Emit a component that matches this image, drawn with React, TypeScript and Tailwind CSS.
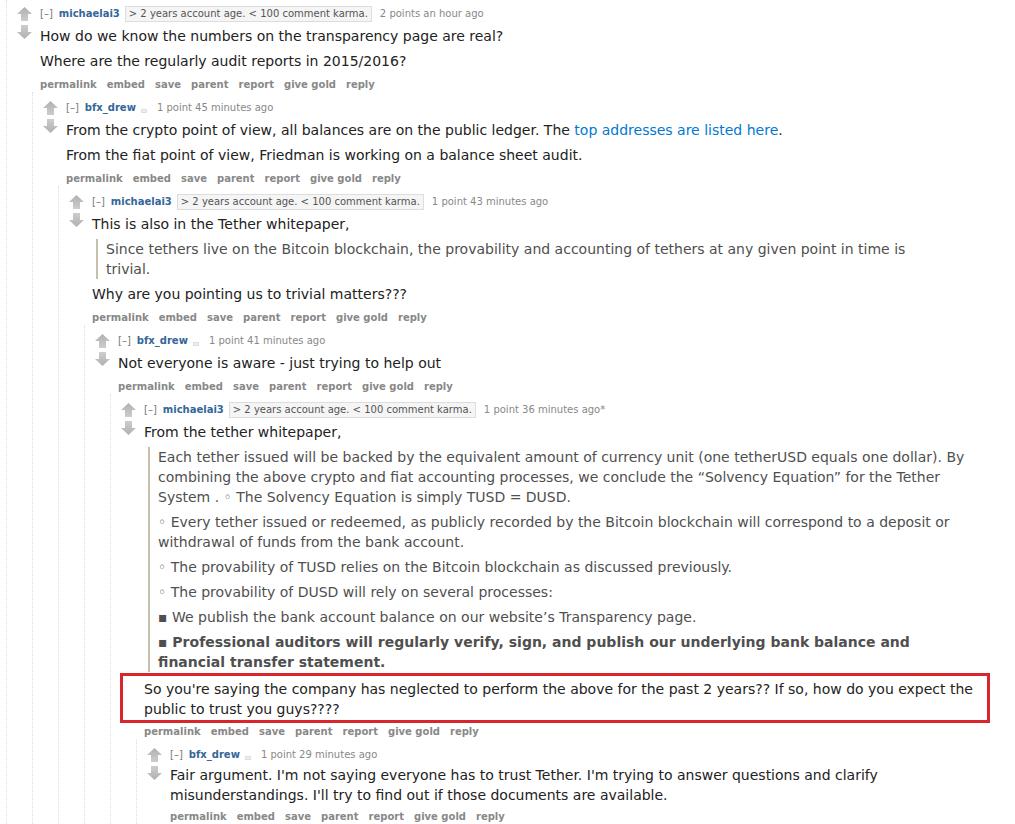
import { ReactNode } from 'react';

type CommentProps = {
  author: string;
  flair?: 'karma' | 'empty';
  meta: string;
  body: ReactNode;
  replies?: ReactNode;
  first?: boolean;
  tight?: boolean;
};

const UpArrow = () => (
  <svg width="15" height="14" viewBox="0 0 15 14">
    <defs>
      <linearGradient id="up" x1="0" y1="0" x2="0" y2="1">
        <stop offset="0" stopColor="#b0b0b0" />
        <stop offset="1" stopColor="#cdcdcd" />
      </linearGradient>
    </defs>
    <polygon points="7.5,0 15,7 11,7 11,14 4,14 4,7 0,7" fill="url(#up)" />
  </svg>
);

const DownArrow = () => (
  <svg width="15" height="14" viewBox="0 0 15 14">
    <defs>
      <linearGradient id="down" x1="0" y1="0" x2="0" y2="1">
        <stop offset="0" stopColor="#cdcdcd" />
        <stop offset="1" stopColor="#b0b0b0" />
      </linearGradient>
    </defs>
    <polygon points="4,0 11,0 11,7 15,7 7.5,14 0,7 4,7" fill="url(#down)" />
  </svg>
);

const Buttons = ({ className = 'mt-[5px]' }: { className?: string }) => (
  <ul className={`flex h-[16px] items-center gap-[10px] text-[10px] font-bold text-[#888] ${className}`}>
    {['permalink', 'embed', 'save', 'parent', 'report', 'give gold', 'reply'].map((b) => (
      <li key={b}>{b}</li>
    ))}
  </ul>
);

const Comment = ({ author, flair, meta, body, replies, first, tight }: CommentProps) => (
  <div className={`border-l border-dotted border-[#dddddf] ${first ? 'pt-[6px]' : 'pt-[8px]'}`}>
    <div className="flex">
      <div className="ml-[10px] mr-[8px] flex w-[15px] shrink-0 flex-col gap-[4px] pt-[1px]">
        <UpArrow />
        <DownArrow />
      </div>
      <div className="min-w-0 flex-1">
        <p className="flex h-[16px] items-center whitespace-nowrap text-[10px] leading-[16px]">
          <span className="text-[#777]">[–]</span>
          <span className="ml-[6px] font-bold text-[#369]">{author}</span>
          {flair === 'karma' && (
            <span className="ml-[5px] border border-[#ddd] bg-[#f5f5f5] px-[3px] leading-[14px] text-[#545454]">
              &gt; 2 years account age. &lt; 100 comment karma.
            </span>
          )}
          {flair === 'empty' && (
            <span className="mb-[-6px] ml-[5px] inline-block h-[4px] w-[6px] border border-[#ddd] bg-[#eee]" />
          )}
          <span className={`${flair === 'karma' ? 'ml-[8px]' : 'ml-[10px]'} text-[#888]`}>{meta}</span>
        </p>
        <div
          className={`${tight ? 'mt-[2px]' : 'mt-[4px]'} flex max-w-[840px] flex-col gap-[5px] text-[14px] leading-[20px] text-[#222]`}
        >
          {body}
        </div>
        <Buttons className={meta.endsWith('*') ? 'mt-[0px]' : tight ? 'mt-[3px]' : 'mt-[5px]'} />
      </div>
    </div>
    {replies && <div className="ml-[25px]">{replies}</div>}
  </div>
);

const Quote = ({ children }: { children: ReactNode }) => (
  <blockquote className="ml-[4px] flex flex-col gap-[5px] border-l-2 border-[#c5c1ad] pl-[8px] pr-[8px] text-[#4f4f4f]">
    {children}
  </blockquote>
);

export default function App() {
  return (
    <div className="min-h-screen bg-white pl-[6px] font-['DejaVu_Sans',Verdana,sans-serif]">
      <Comment
        first
        author="michaelai3"
        flair="karma"
        meta="2 points an hour ago"
        body={
          <>
            <p>How do we know the numbers on the transparency page are real?</p>
            <p>Where are the regularly audit reports in 2015/2016?</p>
          </>
        }
        replies={
          <Comment
            author="bfx_drew"
            flair="empty"
            meta="1 point 45 minutes ago"
            body={
              <>
                <p>
                  From the crypto point of view, all balances are on the public ledger. The{' '}
                  <a className="text-[#0079d3]">top addresses are listed here</a>.
                </p>
                <p>From the fiat point of view, Friedman is working on a balance sheet audit.</p>
              </>
            }
            replies={
              <Comment
                author="michaelai3"
                flair="karma"
                meta="1 point 43 minutes ago"
                body={
                  <>
                    <p>This is also in the Tether whitepaper,</p>
                    <Quote>
                      <p>
                        Since tethers live on the Bitcoin blockchain, the provability and accounting of tethers at any
                        given point in time is trivial.
                      </p>
                    </Quote>
                    <p>Why are you pointing us to trivial matters???</p>
                  </>
                }
                replies={
                  <Comment
                    author="bfx_drew"
                    flair="empty"
                    meta="1 point 41 minutes ago"
                    body={<p>Not everyone is aware - just trying to help out</p>}
                    replies={
                      <Comment
                        author="michaelai3"
                        flair="karma"
                        meta="1 point 36 minutes ago*"
                        body={
                          <>
                            <p>From the tether whitepaper,</p>
                            <Quote>
                              <p>
                                Each tether issued will be backed by the equivalent amount of currency unit (one
                                tetherUSD equals one dollar). By combining the above crypto and fiat accounting
                                processes, we conclude the “Solvency Equation” for the Tether System . ◦ The Solvency
                                Equation is simply TUSD = DUSD.
                              </p>
                              <p>
                                ◦ Every tether issued or redeemed, as publicly recorded by the Bitcoin blockchain will
                                correspond to a deposit or withdrawal of funds from the bank account.
                              </p>
                              <p>◦ The provability of TUSD relies on the Bitcoin blockchain as discussed previously.</p>
                              <p>◦ The provability of DUSD will rely on several processes:</p>
                              <p>▪ We publish the bank account balance on our website’s Transparency page.</p>
                              <p className="font-bold">
                                ▪ Professional auditors will regularly verify, sign, and publish our underlying bank
                                balance and financial transfer statement.
                              </p>
                            </Quote>
                            <div className="-ml-[24px] -mt-[4px] w-[870px] border-[3px] border-[#d9262c] pb-[1px] pl-[21px] pr-[3px] pt-[3px]">
                              <p>
                                So you're saying the company has neglected to perform the above for the past 2
                                years?? If so, how do you expect the public to trust you guys????
                              </p>
                            </div>
                          </>
                        }
                        replies={
                          <Comment
                            tight
                            author="bfx_drew"
                            flair="empty"
                            meta="1 point 29 minutes ago"
                            body={
                              <p>
                                Fair argument. I'm not saying everyone has to trust Tether. I'm trying to answer
                                questions and clarify misunderstandings. I'll try to find out if those documents are
                                available.
                              </p>
                            }
                          />
                        }
                      />
                    }
                  />
                }
              />
            }
          />
        }
      />
    </div>
  );
}
